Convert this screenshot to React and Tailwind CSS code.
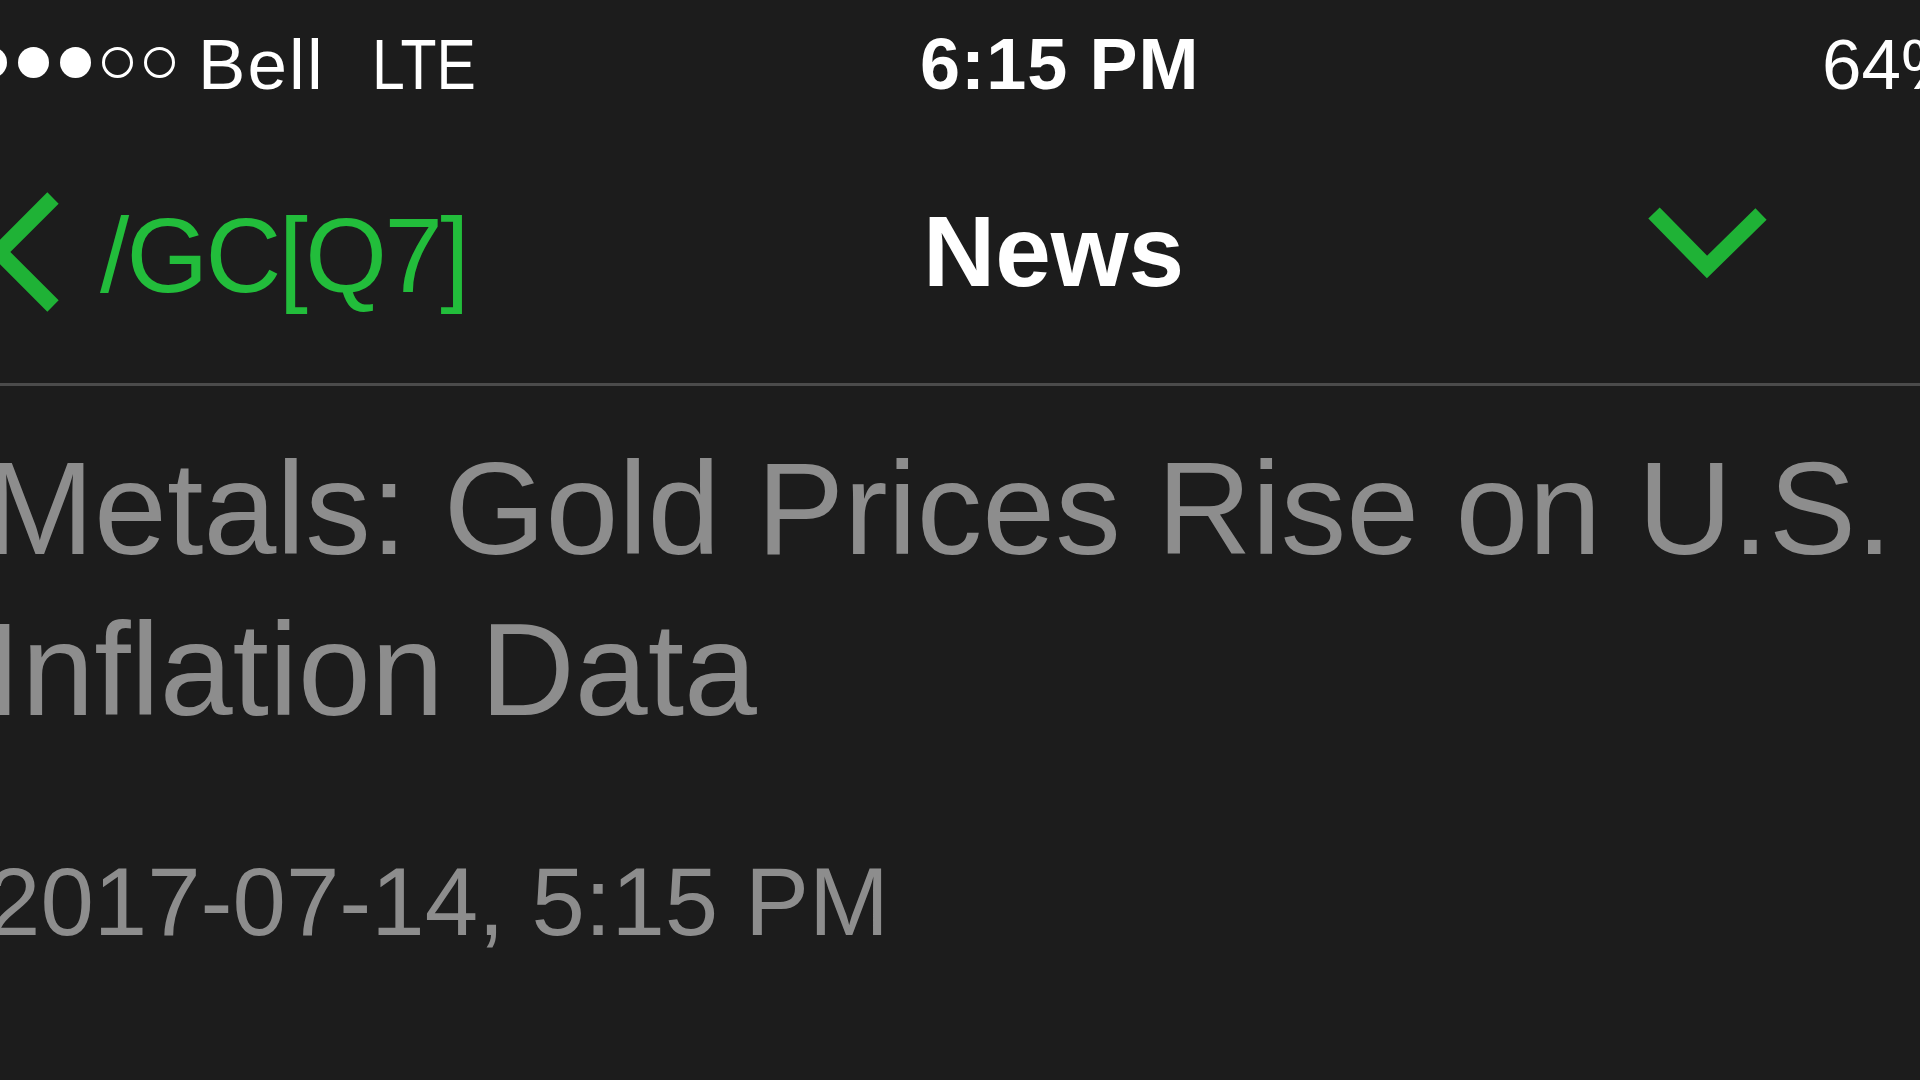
import React from "react";

const Dot = ({ filled }) => (
  <span
    className={
      filled
        ? "block w-[31px] h-[31px] rounded-full bg-white shrink-0"
        : "block w-[31px] h-[31px] rounded-full border-[3px] border-white shrink-0"
    }
  />
);

export default function App() {
  const dots = [true, true, true, false, false];

  return (
    <div className="w-[1920px] h-[1080px] overflow-hidden bg-[#1c1c1c] font-['Liberation_Sans',Arial,sans-serif]">
      {/* Status bar */}
      <div className="flex items-center pt-[28px] text-white leading-none">
        <div className="w-[920px] shrink-0 flex items-center">
          <div className="flex items-center gap-[11px] ml-[-24px] mt-[-4px]">
            {dots.map((f, i) => (
              <Dot key={i} filled={f} />
            ))}
          </div>
          <span className="ml-[23px] text-[71px] leading-none tracking-[0.03em]">Bell</span>
          <span className="ml-[47px] text-[71px] leading-none inline-block origin-left scale-x-[0.83]">
            LTE
          </span>
        </div>
        <div className="w-[902px] shrink-0 text-[72px] font-bold leading-none tracking-[0.015em]">
          6:15 PM
        </div>
        <div className="text-[71px] leading-none whitespace-nowrap">64%</div>
      </div>

      {/* Nav bar */}
      <div className="flex items-start h-[283px]">
        <div className="w-[923px] shrink-0 flex items-start">
          <svg
            width="64"
            height="130"
            viewBox="0 0 64 130"
            className="mt-[87px] shrink-0 overflow-visible"
          >
            <polyline
              points="53,11 -1,65 53,119"
              fill="none"
              stroke="#1fb236"
              strokeWidth="16"
              strokeLinecap="butt"
              strokeLinejoin="miter"
            />
          </svg>
          <span className="ml-[36px] mt-[103px] text-[105px] leading-none tracking-[-0.025em] text-[#22bd3b]">
            /GC[Q7]
          </span>
        </div>
        <div className="w-[714px] shrink-0 mt-[101px] text-[100px] font-bold leading-none text-white">
          News
        </div>
        <svg width="140" height="100" viewBox="0 0 140 100" className="mt-[91px] shrink-0">
          <polyline
            points="17,22 70,76 124,23"
            fill="none"
            stroke="#1fb236"
            strokeWidth="16"
            strokeLinecap="butt"
            strokeLinejoin="miter"
          />
        </svg>
      </div>
      <div className="h-[3px] bg-[#4b4b4b]" />

      {/* Article */}
      <h1 className="mt-[42px] ml-[-15px] w-[1935px] text-[131px] leading-[161px] font-normal text-[#8d8d8d]">
        Metals: Gold Prices Rise on U.S. Inflation Data
      </h1>
      <p className="mt-[104px] ml-[-13px] text-[96px] leading-none text-[#8d8d8d] whitespace-nowrap">
        2017-07-14, 5:15 PM
      </p>
    </div>
  );
}
